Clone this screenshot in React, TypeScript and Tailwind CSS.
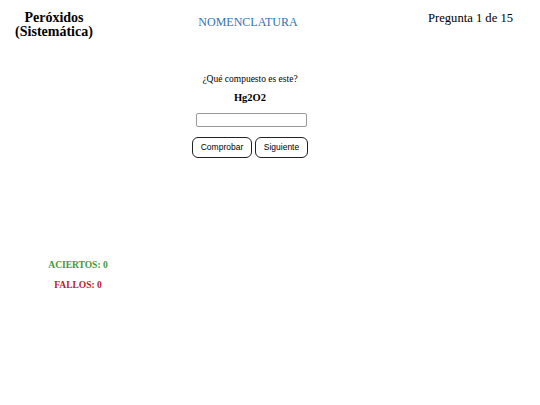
import React from 'react';

const serif = { fontFamily: '"Liberation Serif", "Times New Roman", serif' };
const sans = { fontFamily: '"Liberation Sans", Arial, sans-serif' };

function Header() {
  return (
    <div className="flex items-start">
      <div className="w-[108px] pt-[11px] text-center text-[14px] leading-[14px] font-bold text-black">
        Peróxidos
        <br />
        (Sistemática)
      </div>
      <div className="w-[280px] pt-[15px] text-center text-[12px] leading-[14px] text-[#2e74b5]">
        NOMENCLATURA
      </div>
      <div className="flex-1 pt-[11px] pr-[27px] text-right text-[12.6px] leading-[14px] text-black">
        Pregunta 1 de 15
      </div>
    </div>
  );
}

function Question() {
  return (
    <div className="w-[500px] flex flex-col items-center">
      <p className="mt-[34px] text-[9.5px] leading-[12px] text-black">¿Qué compuesto es este?</p>
      <p className="mt-[6px] text-[10.5px] leading-[13px] font-bold text-black">Hg2O2</p>
      <input
        type="text"
        className="mt-[9px] ml-[2px] w-[111px] h-[14px] border border-[#9a9a9a] rounded-[2px] bg-white outline-none"
      />
      <div className="mt-[10px] flex gap-[3px]" style={sans}>
        <button className="w-[60px] h-[21px] border border-[#222] rounded-[6px] bg-white text-[8.5px] text-black">
          Comprobar
        </button>
        <button className="w-[53px] h-[21px] border border-[#222] rounded-[6px] bg-white text-[8.5px] text-black">
          Siguiente
        </button>
      </div>
    </div>
  );
}

function Stats() {
  return (
    <div className="w-[156px] mt-[101px] flex flex-col items-center text-[9.5px] leading-[12px] font-bold">
      <p className="text-[#3c9a2e]">ACIERTOS: 0</p>
      <p className="mt-[8px] text-[#c0201f]">FALLOS: 0</p>
    </div>
  );
}

export default function App() {
  return (
    <div className="w-[540px] h-[405px] bg-white overflow-hidden" style={serif}>
      <Header />
      <Question />
      <Stats />
    </div>
  );
}
